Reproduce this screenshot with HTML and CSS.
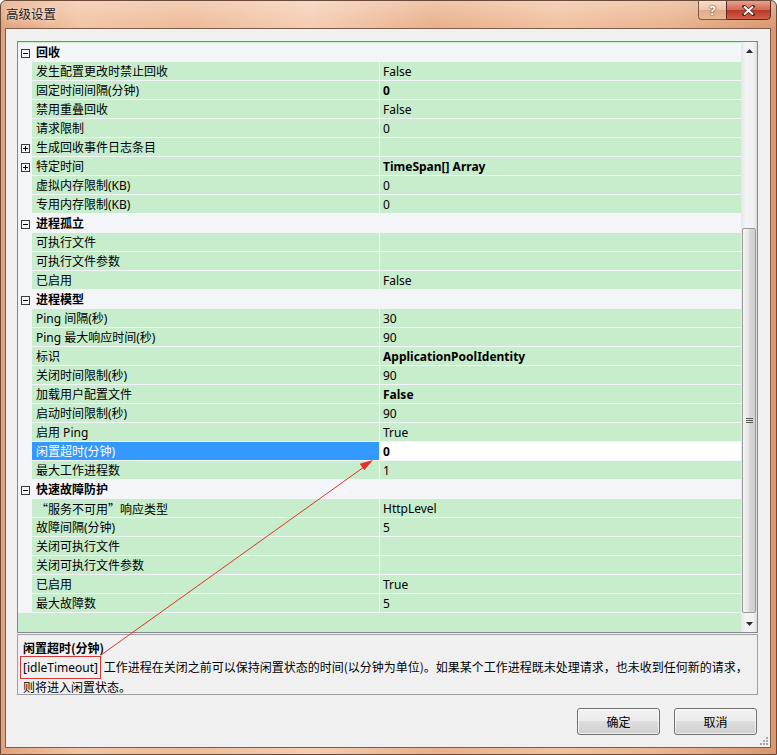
FILE: index.html
```html
<!DOCTYPE html>
<html lang="zh-CN">
<head>
<meta charset="utf-8">
<title>高级设置</title>
<link rel="stylesheet" href="styles.css">
</head>
<body>
<div class="window">
  <div class="titlebar">
    <span class="title">高级设置</span>
    <div class="caption">
      <div class="cap-help">?</div>
      <div class="cap-close">
        <svg width="13" height="11" viewBox="0 0 13 11"><path d="M2 1.5l9 8M11 1.5l-9 8" stroke="#5a1a10" stroke-width="3.4" stroke-linecap="square"/><path d="M2 1.5l9 8M11 1.5l-9 8" stroke="#fff" stroke-width="2"/></svg>
      </div>
    </div>
  </div>
  <div class="client">
    <div class="grid">
      <div class="rows">
        <div class="row cat"><span class="gut"><svg class="tog" width="9" height="9" viewBox="0 0 9 9"><rect x="0.5" y="0.5" width="8" height="8" fill="none" stroke="#3a3a3a"/><path d="M2 4.5h5" stroke="#000"/></svg></span><span class="cname">回收</span></div>
        <div class="row"><span class="gut"></span><span class="name">发生配置更改时禁止回收</span><span class="val">False</span></div>
        <div class="row"><span class="gut"></span><span class="name">固定时间间隔(分钟)</span><span class="val b">0</span></div>
        <div class="row"><span class="gut"></span><span class="name">禁用重叠回收</span><span class="val">False</span></div>
        <div class="row"><span class="gut"></span><span class="name">请求限制</span><span class="val">0</span></div>
        <div class="row"><span class="gut"><svg class="tog" width="9" height="9" viewBox="0 0 9 9"><rect x="0.5" y="0.5" width="8" height="8" fill="none" stroke="#3a3a3a"/><path d="M2 4.5h5M4.5 2v5" stroke="#000"/></svg></span><span class="name">生成回收事件日志条目</span><span class="val"></span></div>
        <div class="row"><span class="gut"><svg class="tog" width="9" height="9" viewBox="0 0 9 9"><rect x="0.5" y="0.5" width="8" height="8" fill="none" stroke="#3a3a3a"/><path d="M2 4.5h5M4.5 2v5" stroke="#000"/></svg></span><span class="name">特定时间</span><span class="val b">TimeSpan[] Array</span></div>
        <div class="row"><span class="gut"></span><span class="name">虚拟内存限制(KB)</span><span class="val">0</span></div>
        <div class="row"><span class="gut"></span><span class="name">专用内存限制(KB)</span><span class="val">0</span></div>
        <div class="row cat"><span class="gut"><svg class="tog" width="9" height="9" viewBox="0 0 9 9"><rect x="0.5" y="0.5" width="8" height="8" fill="none" stroke="#3a3a3a"/><path d="M2 4.5h5" stroke="#000"/></svg></span><span class="cname">进程孤立</span></div>
        <div class="row"><span class="gut"></span><span class="name">可执行文件</span><span class="val"></span></div>
        <div class="row"><span class="gut"></span><span class="name">可执行文件参数</span><span class="val"></span></div>
        <div class="row"><span class="gut"></span><span class="name">已启用</span><span class="val">False</span></div>
        <div class="row cat"><span class="gut"><svg class="tog" width="9" height="9" viewBox="0 0 9 9"><rect x="0.5" y="0.5" width="8" height="8" fill="none" stroke="#3a3a3a"/><path d="M2 4.5h5" stroke="#000"/></svg></span><span class="cname">进程模型</span></div>
        <div class="row"><span class="gut"></span><span class="name">Ping 间隔(秒)</span><span class="val">30</span></div>
        <div class="row"><span class="gut"></span><span class="name">Ping 最大响应时间(秒)</span><span class="val">90</span></div>
        <div class="row"><span class="gut"></span><span class="name">标识</span><span class="val b">ApplicationPoolIdentity</span></div>
        <div class="row"><span class="gut"></span><span class="name">关闭时间限制(秒)</span><span class="val">90</span></div>
        <div class="row"><span class="gut"></span><span class="name">加载用户配置文件</span><span class="val b">False</span></div>
        <div class="row"><span class="gut"></span><span class="name">启动时间限制(秒)</span><span class="val">90</span></div>
        <div class="row"><span class="gut"></span><span class="name">启用 Ping</span><span class="val">True</span></div>
        <div class="row sel"><span class="gut"></span><span class="name">闲置超时(分钟)</span><span class="val b">0</span></div>
        <div class="row"><span class="gut"></span><span class="name">最大工作进程数</span><span class="val">1</span></div>
        <div class="row cat"><span class="gut"><svg class="tog" width="9" height="9" viewBox="0 0 9 9"><rect x="0.5" y="0.5" width="8" height="8" fill="none" stroke="#3a3a3a"/><path d="M2 4.5h5" stroke="#000"/></svg></span><span class="cname">快速故障防护</span></div>
        <div class="row"><span class="gut"></span><span class="name"><span class="cjk">“服务不可用”</span>响应类型</span><span class="val">HttpLevel</span></div>
        <div class="row"><span class="gut"></span><span class="name">故障间隔(分钟)</span><span class="val">5</span></div>
        <div class="row"><span class="gut"></span><span class="name">关闭可执行文件</span><span class="val"></span></div>
        <div class="row"><span class="gut"></span><span class="name">关闭可执行文件参数</span><span class="val"></span></div>
        <div class="row"><span class="gut"></span><span class="name">已启用</span><span class="val">True</span></div>
        <div class="row"><span class="gut"></span><span class="name">最大故障数</span><span class="val">5</span></div>
      </div>
      <div class="scrollbar">
        <div class="sb-btn"><svg width="7" height="4" viewBox="0 0 7 4"><path d="M0 4L3.5 0L7 4Z" fill="#2a2a2a"/></svg></div>
        <div class="sb-track">
          <div class="sb-thumb"><svg width="7" height="6" viewBox="0 0 7 6"><path d="M0 .5h7M0 2.5h7M0 4.5h7" stroke="#5a5a5a"/></svg></div>
        </div>
        <div class="sb-btn"><svg width="7" height="4" viewBox="0 0 7 4"><path d="M0 0L3.5 4L7 0Z" fill="#2a2a2a"/></svg></div>
      </div>
    </div>
    <div class="desc">
      <div class="desc-title">闲置超时(分钟)</div>
      <div class="desc-line"><span class="mark">[idleTimeout]</span> 工作进程在关闭之前可以保持闲置状态的时间(以分钟为单位)。如果某个工作进程既未处理请求，也未收到任何新的请求，</div>
      <div class="desc-line">则将进入闲置状态。</div>
    </div>
    <div class="buttons">
      <button class="btn">确定</button>
      <button class="btn">取消</button>
    </div>
    <svg class="grip" width="10" height="10" viewBox="0 0 10 10"><g fill="#a8a8a8"><rect x="7" y="1" width="2" height="2"/><rect x="4" y="4" width="2" height="2"/><rect x="7" y="4" width="2" height="2"/><rect x="1" y="7" width="2" height="2"/><rect x="4" y="7" width="2" height="2"/><rect x="7" y="7" width="2" height="2"/></g></svg>
  </div>
  <svg class="arrow" width="777" height="755" viewBox="0 0 777 755">
    <line x1="101" y1="655" x2="364" y2="467" stroke="#e0322c" stroke-width="1"/>
    <polygon points="373,460 364.3,470.2 359.7,463.8" fill="#e0322c"/>
  </svg>
</div>
</body>
</html>
```

FILE: styles.css
```css
* { box-sizing: border-box; }

body {
  margin: 0;
  font-family: "Noto Sans", "Noto Sans CJK SC", sans-serif;
  font-size: 12px;
  color: #000;
}

.window {
  position: relative;
  width: 777px;
  height: 755px;
  display: flex;
  flex-direction: column;
  overflow: hidden;
  border: 1px solid #6a4a38;
  border-radius: 6px 6px 0 0;
  background:
    linear-gradient(180deg, rgba(255,255,255,0.28) 0px, rgba(255,255,255,0) 26px),
    linear-gradient(90deg, #e4a27c 0%, #f2c4a4 10%, #eebb98 24%, #f5cdb2 40%, #e9b08b 56%, #f1c19f 72%, #eab48f 86%, #d9976f 100%);
}

.titlebar {
  height: 27px;
  display: flex;
  align-items: flex-start;
  flex-shrink: 0;
}

.title {
  margin: 5px 0 0 5px;
  font-family: "Noto Sans CJK SC", sans-serif;
  font-size: 12.5px;
  line-height: 16px;
  color: #1c1c1c;
  text-shadow: 0 0 6px rgba(255,255,255,0.9);
}

.caption {
  margin-left: auto;
  margin-right: 5px;
  margin-top: -1px;
  display: flex;
}

.cap-help {
  width: 28px;
  height: 20px;
  border: 1px solid #7a5a48;
  border-right: none;
  border-radius: 0 0 0 4px;
  background: linear-gradient(180deg, rgba(255,255,255,0.45), rgba(255,235,220,0.2) 50%, rgba(210,150,115,0.35) 51%, rgba(240,200,170,0.4));
  color: #fff;
  font-weight: bold;
  font-size: 13px;
  line-height: 18px;
  text-align: center;
  text-shadow: 0 0 2px #5a3a28, 0 0 1px #5a3a28;
}

.cap-close {
  width: 45px;
  height: 20px;
  border: 1px solid #5a2a22;
  border-radius: 0 0 4px 0;
  background: linear-gradient(180deg, #e8a08c 0%, #d26a55 48%, #b83a26 52%, #d0614a 100%);
  display: flex;
  align-items: center;
  justify-content: center;
}

.client {
  position: relative;
  flex: 1;
  margin: 0 5px 6px 4px;
  background: #f0f0f0;
  border: 1px solid #7d5c4a;
  padding: 12px 12px 0 11px;
  display: flex;
  flex-direction: column;
}

.grid {
  height: 592px;
  border: 1px solid #828790;
  background: #c7edcc;
  display: flex;
}

.rows {
  width: 723px;
  display: flex;
  flex-direction: column;
  padding-top: 1px;
}

.row {
  height: 19px;
  display: flex;
  background: #f3f5f9;
  line-height: 20px;
  white-space: nowrap;
}

.gut {
  width: 14px;
  height: 19px;
  display: flex;
  align-items: center;
  padding-left: 3px;
}

.tog { display: block; margin-top: 1px; }

.name {
  width: 347px;
  height: 18px;
  background: #c7edcc;
  padding-left: 4px;
  overflow: hidden;
}

.val {
  width: 361px;
  height: 18px;
  margin-left: 1px;
  background: #c7edcc;
  padding-left: 3px;
  overflow: hidden;
}

.b { font-weight: bold; }

.cjk { font-family: "Noto Sans CJK SC", sans-serif; }

.cname {
  padding-left: 4px;
  font-weight: bold;
}

.sel .name {
  background: #3399ff;
  color: #fff;
}

.sel .val {
  background: #fff;
}

.scrollbar {
  width: 17px;
  display: flex;
  flex-direction: column;
  background: linear-gradient(90deg, #e6e6ea 0%, #f4f4f6 30%, #f0f0f2 80%, #dcdce0 100%);
}

.sb-btn {
  height: 17px;
  display: flex;
  align-items: center;
  justify-content: center;
}

.sb-track {
  flex: 1;
  display: flex;
  flex-direction: column;
  padding: 169px 1px 0 1px;
}

.sb-thumb {
  height: 385px;
  border: 1px solid #9a9a9a;
  border-radius: 2px;
  background: linear-gradient(90deg, #f6f6f6 0%, #e6e6e6 45%, #d6d6d6 55%, #cfcfcf 100%);
  display: flex;
  align-items: center;
  justify-content: center;
}

.sb-thumb svg { display: block; }

.desc {
  margin-top: 1px;
  height: 61px;
  border: 1px solid #a0a0a0;
  background: #f0f0f0;
  padding: 3px 4px 0 5px;
  overflow: hidden;
  font-family: "Noto Sans CJK SC", sans-serif;
}

.desc-title {
  line-height: 19px;
  font-weight: bold;
}

.desc-line {
  line-height: 19px;
  white-space: nowrap;
}

.mark {
  font-family: "Noto Sans", sans-serif;
  border: 1px solid #d03a36;
  padding: 2px 2px 2px 2px;
  margin-left: -3px;
}

.buttons {
  margin-top: 13px;
  display: flex;
  justify-content: flex-end;
  gap: 14px;
  padding-right: 1px;
}

.btn {
  width: 83px;
  height: 27px;
  border: 1px solid #707070;
  border-radius: 3px;
  background: linear-gradient(180deg, #f2f2f2 0%, #ebebeb 49%, #dddddd 50%, #cfcfcf 100%);
  box-shadow: inset 0 0 0 1px rgba(255,255,255,0.7);
  font-family: "Noto Sans CJK SC", sans-serif;
  font-size: 12px;
  color: #000;
  padding: 0;
}

.grip {
  position: absolute;
  right: 1px;
  bottom: 1px;
}

.arrow {
  position: absolute;
  left: -1px;
  top: -1px;
  pointer-events: none;
}
```
